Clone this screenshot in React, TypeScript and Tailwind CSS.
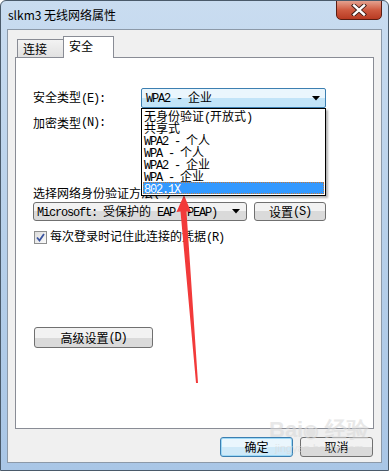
import React from "react";

const CJK = '"Noto Sans CJK SC", "Noto Sans", sans-serif';

// SimSun-like mix: ASCII runs in a narrow mono, CJK in 12px sans
function Mix({ text }: { text: string }) {
  const parts = text.split(/([\x20-\x7e]+)/).filter((p) => p.length > 0);
  return (
    <>
      {parts.map((p, i) =>
        /^[\x20-\x7e]+$/.test(p) ? (
          <span
            key={i}
            className="font-['Liberation_Mono',monospace] text-[12px] tracking-[-1.2px] whitespace-pre"
          >
            {p}
          </span>
        ) : (
          <span key={i}>{p}</span>
        )
      )}
    </>
  );
}

const options = [
  "无身份验证(开放式)",
  "共享式",
  "WPA2 - 个人",
  "WPA - 个人",
  "WPA2 - 企业",
  "WPA - 企业",
  "802.1X",
];

function Win7Button({ label, className = "" }: { label: string; className?: string }) {
  return (
    <div
      className={`flex items-center justify-center rounded-[3px] border border-[#707070] bg-gradient-to-b from-[#f2f2f2] from-50% to-[#dadada] to-50% text-[12px] text-black ${className}`}
    >
      <Mix text={label} />
    </div>
  );
}

export default function App() {
  return (
    <div
      className="relative w-[389px] h-[471px] overflow-hidden bg-gradient-to-b from-[#c9dcf0] via-[#b7d0ea] to-[#a9c6e6] rounded-t-[6px] border border-[#4a5a6a] flex flex-col"
      style={{ fontFamily: CJK }}
    >
      {/* title bar */}
      <div className="h-[28px] flex items-center pl-[7px] relative shrink-0">
        <span className="text-[12px] text-black">slkm3 无线网络属性</span>
        <div className="absolute right-[6px] top-[-1px] w-[46px] h-[20px] rounded-b-[5px] border border-[#5b1d12] bg-gradient-to-b from-[#e4a18f] via-[#cf5a40] to-[#b83a22] flex items-center justify-center">
          <svg width="16" height="12" viewBox="0 0 16 12">
            <path d="M3 1.5 L13 10.5 M13 1.5 L3 10.5" stroke="#3a1a14" strokeWidth="4.2" strokeLinecap="square" />
            <path d="M3 1.5 L13 10.5 M13 1.5 L3 10.5" stroke="#ffffff" strokeWidth="2.4" strokeLinecap="square" />
          </svg>
        </div>
      </div>

      {/* client area */}
      <div className="mx-[6px] mb-[7px] flex-1 bg-[#f0f0f0] border border-[#8c99a8] flex flex-col px-[7px]">
        {/* tabs */}
        <div className="flex items-end h-[27px] pl-[2px] shrink-0">
          <div className="h-[18px] w-[47px] border border-b-0 border-[#898c95] bg-gradient-to-b from-[#f3f3f3] to-[#e1e1e1] text-[12px] leading-[18px] pl-[5px] text-black">
            连接
          </div>
          <div className="h-[22px] w-[51px] border border-b-0 border-[#898c95] bg-white text-[12px] leading-[18px] pl-[5px] text-black -ml-[1px] relative z-10 mb-[-1px]">
            安全
          </div>
        </div>

        {/* tab panel */}
        <div className="h-[372px] w-[359px] border border-[#898c95] bg-white pl-[17px] flex flex-col text-[12px] text-black">
          <div className="flex items-center mt-[30px] h-[20px]">
            <div className="w-[108px]">
              <Mix text="安全类型(E):" />
            </div>
            <div className="relative">
              <div className="w-[185px] h-[20px] rounded-[2px] border border-[#3c7fb1] bg-gradient-to-b from-[#eaf6fd] from-50% to-[#c2e4f8] to-50% flex items-center pl-[4px] pr-[5px]">
                <span className="flex-1 leading-[12px]">
                  <Mix text="WPA2 - 企业" />
                </span>
                <svg width="8" height="5" viewBox="0 0 8 5">
                  <path d="M0 0 H8 L4 4.5 Z" fill="#000" />
                </svg>
              </div>
              {/* open list */}
              <div className="absolute left-0 top-full w-[185px] border border-black bg-white z-20 shadow-[2px_2px_2px_rgba(0,0,0,0.3)] py-[1px]">
                {options.map((o, i) =>
                  i === options.length - 1 ? (
                    <div
                      key={o}
                      className="h-[12px] leading-[12px] pl-[1px] mx-[1px] bg-[#3399ff] text-white outline-1 outline-dotted outline-[#c57a3b] -outline-offset-1"
                    >
                      <Mix text={o} />
                    </div>
                  ) : (
                    <div key={o} className="h-[12px] leading-[12px] pl-[2px]">
                      <Mix text={o} />
                    </div>
                  )
                )}
              </div>
            </div>
          </div>

          <div className="mt-[5px] h-[20px] flex items-center">
            <Mix text="加密类型(N):" />
          </div>

          <div className="mt-[53px] h-[14px] flex items-center">
            <Mix text="选择网络身份验证方法(O):" />
          </div>

          <div className="mt-[2px] flex items-center gap-[7px]">
            <div className="w-[214px] h-[19px] rounded-[3px] border border-[#707070] bg-gradient-to-b from-[#f2f2f2] from-50% to-[#dadada] to-50% flex items-center pl-[3px] pr-[6px]">
              <span className="flex-1 leading-[12px]">
                <Mix text="Microsoft: 受保护的 EAP (PEAP)" />
              </span>
              <svg width="8" height="5" viewBox="0 0 8 5">
                <path d="M0 0 H8 L4 4.5 Z" fill="#000" />
              </svg>
            </div>
            <Win7Button label="设置(S)" className="w-[72px] h-[19px]" />
          </div>

          <div className="mt-[8px] flex items-center gap-[3px] pl-[1px]">
            <div className="w-[13px] h-[13px] border border-[#8e8f8f] bg-gradient-to-br from-[#dcdcdc] to-[#fbfbfb] flex items-center justify-center">
              <svg width="9" height="9" viewBox="0 0 9 9">
                <path d="M1 4.5 L3.5 7.5 L8 1" stroke="#3a54a0" strokeWidth="1.8" fill="none" />
              </svg>
            </div>
            <span className="leading-[14px]">
              <Mix text="每次登录时记住此连接的凭据(R)" />
            </span>
          </div>

          <div className="mt-[82px]">
            <Win7Button label="高级设置(D)" className="w-[119px] h-[21px] ml-[1px]" />
          </div>
        </div>

        {/* bottom buttons */}
        <div className="flex justify-end gap-[7px] mt-[8px] pr-[1px]">
          <div className="w-[73px] h-[20px] rounded-[3px] border border-[#3c7fb1] bg-gradient-to-b from-[#eaf6fd] from-50% to-[#cfe9f8] to-50% shadow-[inset_0_0_0_1px_#9ed9f6] flex items-center justify-center text-[12px]">
            确定
          </div>
          <Win7Button label="取消" className="w-[73px] h-[20px]" />
        </div>
      </div>

      {/* watermark */}
      <div className="absolute left-[268px] top-[418px] pointer-events-none text-[#dadada] opacity-60 leading-none">
        <div className="text-[22px] font-bold font-['Liberation_Sans',sans-serif]">
          Bai<span className="text-[18px]">◉</span> 经验
        </div>
        <div className="text-[11px] mt-[2px] pl-[6px] font-['Liberation_Sans',sans-serif]">jingyan.baidu.com</div>
      </div>

      {/* red arrow */}
      <svg className="absolute left-0 top-0 pointer-events-none" width="389" height="471" viewBox="0 0 389 471">
        <path d="M183 194 L190 211 L185.5 210.5 L197 382 L195 382 L179.5 210.5 L175.5 211 Z" fill="#f23a3a" />
      </svg>
    </div>
  );
}
